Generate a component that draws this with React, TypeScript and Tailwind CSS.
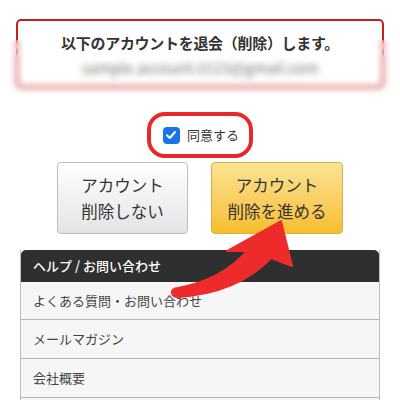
import React from "react";

export default function App() {
  const font = { fontFamily: '"Noto Sans CJK JP", "Noto Sans", sans-serif' };
  return (
    <div className="relative w-[400px] h-[400px] overflow-hidden bg-white text-[#333]" style={font}>
      <div className="px-4 pt-[19px]">
        <div className="h-[69px] rounded-[5px] border-2 border-[#c81e1e] flex flex-col items-center pt-[11px]">
          <div className="text-[15px] font-semibold leading-[22px] text-[#333] tracking-[-0.3px]">以下のアカウントを退会（削除）します。</div>
          <div className="mt-[4px] text-[15px] leading-[20px] text-[#7a7a7a]">sample.account.0123@gmail.com</div>
        </div>
      </div>
      <div className="absolute left-0 top-[51px] w-[400px] h-[46px] backdrop-blur-[3px]"></div>
      <div className="absolute left-0 top-[40px] w-[40px] h-[12px] backdrop-blur-[3px]"></div>
      <div className="absolute right-0 top-[40px] w-[40px] h-[12px] backdrop-blur-[3px]"></div>

      <div className="mt-[24px] flex justify-center">
        <div className="w-[106px] h-[46px] rounded-[18px] border-[4px] border-[#e8292b] flex items-center justify-center gap-[7px] pl-[2px]">
          <div className="w-[17px] h-[17px] rounded-[4px] bg-[#1a73e8] flex items-center justify-center">
            <svg width="12" height="12" viewBox="0 0 12 12" fill="none">
              <path d="M2 6.3 L4.8 9 L10 3" stroke="white" strokeWidth="2" strokeLinecap="round" strokeLinejoin="round" />
            </svg>
          </div>
          <span className="text-[13px] leading-[18px] text-[#333]">同意する</span>
        </div>
      </div>

      <div className="mt-[4px] flex justify-center gap-[23px]">
        <div className="w-[131px] h-[72px] rounded-[4px] border border-[#bdbdbd] bg-gradient-to-b from-[#ffffff] to-[#e4e4e4] flex flex-col items-center justify-center text-[16.5px] leading-[26px] text-[#333]">
          <span>アカウント</span>
          <span>削除しない</span>
        </div>
        <div className="w-[132px] h-[72px] rounded-[4px] border border-[#d8b04a] bg-gradient-to-b from-[#fbe391] to-[#f7bd27] flex flex-col items-center justify-center text-[16.5px] leading-[26px] text-[#333]">
          <span>アカウント</span>
          <span>削除を進める</span>
        </div>
      </div>

      <div className="mx-5 mt-[16px] border-x border-[#bbbbbb]">
        <div className="h-[32px] bg-[#2f2f2f] rounded-t-[5px] flex items-center pl-[12px] text-[13px] font-medium text-white">ヘルプ / お問い合わせ</div>
        <div className="h-[38px] bg-[#f6f6f6] border-b border-[#b5b5b5] flex items-center pl-[12px] text-[13px] text-[#444]">よくある質問・お問い合わせ</div>
        <div className="h-[39px] bg-[#f6f6f6] border-b border-[#b5b5b5] flex items-center pl-[12px] text-[13px] text-[#444]">メールマガジン</div>
        <div className="h-[39px] bg-[#f6f6f6] border-b border-[#b5b5b5] flex items-center pl-[12px] text-[13px] text-[#444]">会社概要</div>
        <div className="h-[39px] bg-[#f6f6f6]"></div>
      </div>

      <svg className="absolute left-0 top-0" width="400" height="400" viewBox="0 0 400 400">
        <path
          d="M281 221 L292 266 L271 258 Q238 293 177 297 Q171 296 172 291 Q174 288 178 288 Q222 280 247 251 L227 251 Z"
          fill="#ee2b2b"
          stroke="#ee2b2b"
          strokeWidth="2"
          strokeLinejoin="round"
        />
      </svg>
    </div>
  );
}
